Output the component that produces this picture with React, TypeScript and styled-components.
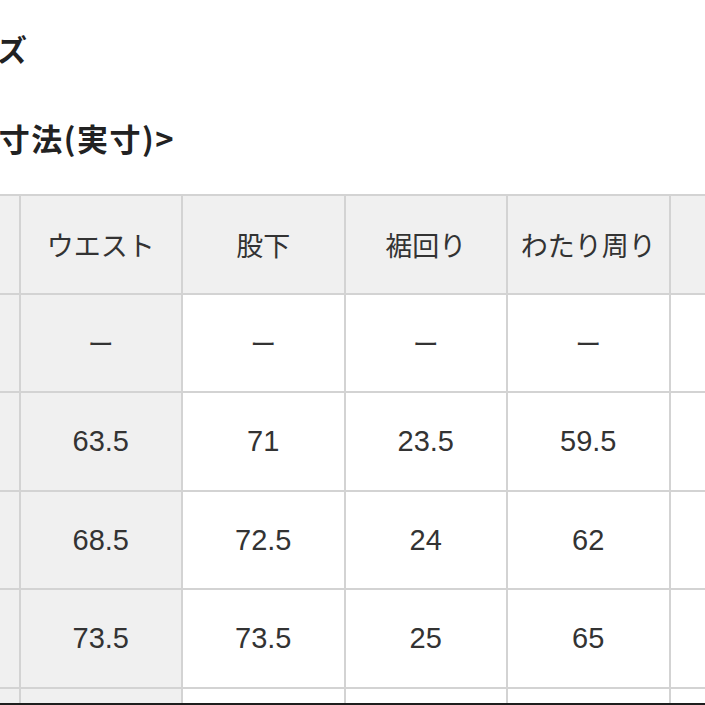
import styled, { createGlobalStyle } from 'styled-components';

const GlobalStyle = createGlobalStyle`
  html, body {
    margin: 0;
    padding: 0;
    background: #fff;
    overflow: hidden;
  }
  body {
    font-family: "Noto Sans CJK JP", "Noto Sans", sans-serif;
    color: #333;
  }
`;

const columns = ['サイズ', 'ウエスト', '股下', '裾回り', 'わたり周り', 'ヒップ'];

const rows: { size: string; values: string[] }[] = [
  { size: 'XS', values: ['ー', 'ー', 'ー', 'ー', ''] },
  { size: 'S', values: ['63.5', '71', '23.5', '59.5', ''] },
  { size: 'M', values: ['68.5', '72.5', '24', '62', ''] },
  { size: 'L', values: ['73.5', '73.5', '25', '65', ''] },
  { size: 'XL', values: ['78.5', '74.5', '26', '68', ''] },
];

const App = () => {
  return (
    <>
      <GlobalStyle />
      <Page>
        <Heading>サイズ</Heading>
        <SubHeading>&lt;商品寸法(実寸)&gt;</SubHeading>

        <TableWrap>
          <SizeTable>
            <colgroup>
              {columns.map((c) => (
                <col key={c} />
              ))}
            </colgroup>
            <thead>
              <tr>
                {columns.map((c) => (
                  <HeadCell key={c}>{c}</HeadCell>
                ))}
              </tr>
            </thead>
            <tbody>
              {rows.map((row) => (
                <tr key={row.size}>
                  <Cell $shaded>{row.size}</Cell>
                  {row.values.map((v, i) => (
                    <Cell key={i} $shaded={i === 0} $dash={v === 'ー'}>
                      {v}
                    </Cell>
                  ))}
                </tr>
              ))}
            </tbody>
          </SizeTable>
        </TableWrap>
      </Page>
      <BottomEdge />
    </>
  );
};

export default App;

const Page = styled.div`
  width: 705px;
  height: 705px;
  overflow: hidden;
  box-sizing: border-box;
  padding-top: 26px;
`;

const Heading = styled.h2`
  margin: 0 0 0 -62px;
  font-size: 30px;
  font-weight: 700;
  line-height: 44px;
  color: #222;
  white-space: nowrap;
`;

const SubHeading = styled.h3`
  margin: 46px 0 0 -86px;
  font-size: 31px;
  font-weight: 700;
  line-height: 44px;
  letter-spacing: 1.5px;
  color: #222;
  white-space: nowrap;
`;

const TableWrap = styled.div`
  margin-top: 34px;
  margin-left: -144px;
`;

const SizeTable = styled.table`
  border-collapse: collapse;
  table-layout: fixed;
  width: ${162.5 * 6}px;

  col {
    width: 162.5px;
  }

  tr {
    height: 98.6px;
  }
`;

const HeadCell = styled.th`
  border: 2px solid #d3d3d3;
  background: #f0f0f0;
  font-family: "Noto Sans CJK JP", sans-serif;
  font-size: 27px;
  font-weight: 400;
  color: #333;
  text-align: center;
  vertical-align: middle;
  padding: 0;
  white-space: nowrap;
  overflow: hidden;
`;

const Cell = styled.td<{ $shaded?: boolean; $dash?: boolean }>`
  border: 2px solid #d3d3d3;
  background: ${(p) => (p.$shaded ? '#f0f0f0' : '#fff')};
  font-family: ${(p) =>
    p.$dash ? '"Noto Sans CJK JP", sans-serif' : '"Liberation Sans", Arial, sans-serif'};
  font-size: ${(p) => (p.$dash ? '26px' : '29px')};
  color: #333;
  text-align: center;
  vertical-align: middle;
  padding: 0;
`;

const BottomEdge = styled.div`
  position: fixed;
  left: 0;
  right: 0;
  bottom: 0;
  height: 2px;
  background: #1e1e1e;
`;
